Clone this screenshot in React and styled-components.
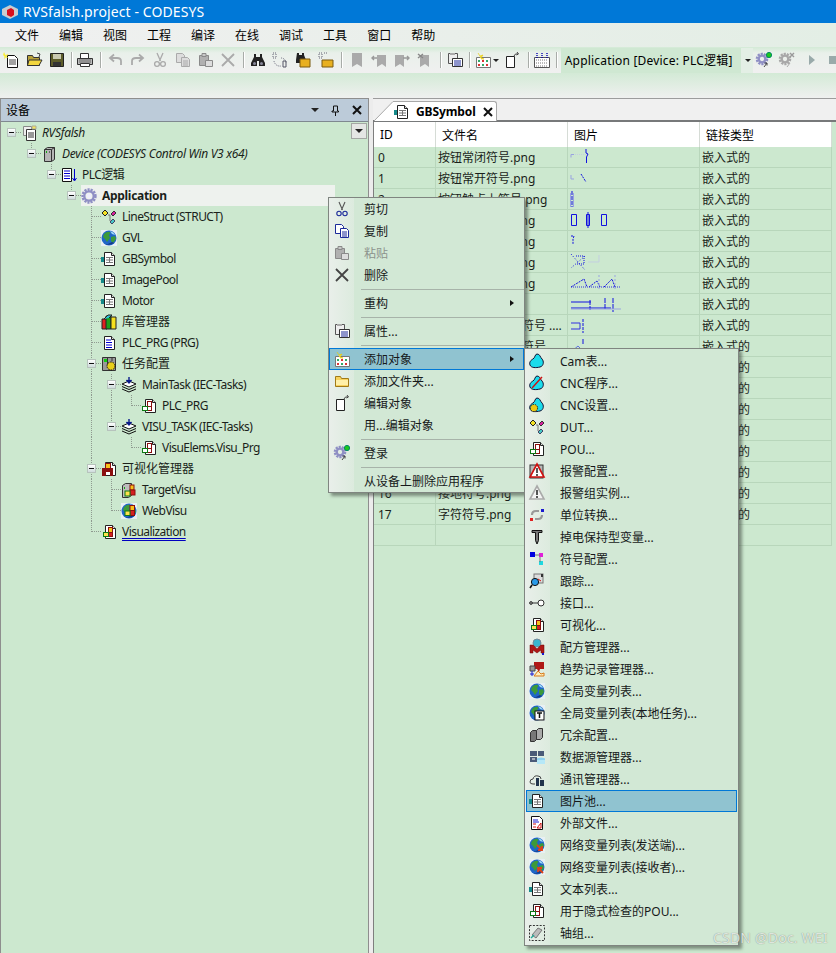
import React from "react";
import styled, { createGlobalStyle } from "styled-components";

const FONT = `"Noto Sans", "Noto Sans CJK SC", sans-serif`;
const GREEN = "#cce8cf";

const Global = createGlobalStyle`
  html, body { margin: 0; padding: 0; background: ${GREEN}; }
  body { font-family: ${FONT}; font-size: 12px; color: #000; overflow: hidden; }
`;

/* ---------- icons ---------- */
const Pg = ({ x = 3 }) => <path d={`M${x + .5} 1.5h7l3 3v10h-10z`} fill="#fff" stroke="#222" />;
const Fold = ({ x = 3 }) => <path d={`M${x + 7.5} 1.5v3h3`} fill="#ddd" stroke="#222" />;
const GlobeBase = () => (
  <>
    <rect x="0" y="0" width="16" height="16" fill="#e8f0f4" />
    <circle cx="8" cy="8" r="7.5" fill="#1f66c8" />
    <path d="M3 4q3-3 6-2 1 2-1 3l1 3-3 4-2-3-2-2zM10 7l4-1 1 3-3 4-2-2z" fill="#3c9a3a" />
    <path d="M9 1q4 1 5 4l-3-1z" fill="#9fd8f5" />
    <path d="M4 14q5 2 9-1l-2-1-4 2z" fill="#163a86" />
  </>
);
const Squares = () => (
  <>
    <rect x="7.5" y="3.5" width="4" height="5" fill="#f7c21a" stroke="#8b1010" />
    <rect x="7.5" y="8.5" width="4" height="4" fill="#d42020" stroke="#8b1010" />
    <rect x="2.5" y="8.5" width="5" height="4" fill="#ffe14d" stroke="#0d7a14" />
  </>
);
const Gear = ({ fill = "#8f8fc4", x = 8, y = 8, r = 6.4 }) => (
  <>
    <circle cx={x} cy={y} r={r} fill="none" stroke={fill} strokeWidth="2.6" strokeDasharray="2.1 1" />
    <circle cx={x} cy={y} r={r - 1.7} fill="none" stroke={fill} strokeWidth="2.3" />
  </>
);
const DutShapes = () => (
  <>
    <path d="M1 4l3-3 3 3-3 3z" fill="#f4e224" stroke="#222" />
    <path d="M10 5l3-3 2 2-3 3z" fill="#d8219e" stroke="#333" />
    <path d="M9 13l3-3 2 2-3 3z" fill="#45c6c6" stroke="#446" />
    <path d="M7 6h2v6" fill="none" stroke="#777" />
  </>
);
const Cam = ({ slash, gear }) => (
  <>
    <path d="M8 1c3 0 3 3 5 5s2 7-2 8-9 1-10-2 1-5 3-6 2-5 4-5z" fill="#1cdcec" stroke="#113" />
    {slash && <path d="M3 13L13 2" stroke="#d01010" strokeWidth="1.4" />}
    {gear && <><circle cx="5" cy="11" r="3.6" fill="#ecc914" stroke="#222" strokeDasharray="1.5 1" /></>}
  </>
);

const ICONS = {
  project: <><path d="M2.5 1.5h8v9h-8z" fill="#eee" stroke="#888" /><path d="M5.5 4.5h9v11h-9z" fill="#fff" stroke="#333" /><path d="M7 8h6M7 10h6M7 12h6" stroke="#333" /><path d="M11 1h4v3h-4z" fill="#f6e55a" stroke="#aa9" /></>,
  device: <><path d="M3.5 3.5l3-2h7v12l-3 2h-7z" fill="#b6b6b6" stroke="#333" /><path d="M3.5 3.5h7v12M10.5 3.5l3-2" fill="none" stroke="#333" /><path d="M5 5h1v2H5z" fill="#1a1" /><path d="M8 5h1v2H8z" fill="#666" /></>,
  plc: <><path d="M1.5 1.5h9v13h-9z" fill="#fff" stroke="#111" /><path d="M3 4h6M3 6.5h6M3 9h6M3 11.5h6" stroke="#0000d0" /><path d="M13.5 2v11M11.5 11l2 3 2-3" fill="none" stroke="#0000d0" /></>,
  gear: <><Gear /><circle cx="8" cy="8" r="2.2" fill="#eef" /></>,
  gearGrey: <><Gear fill="#9b9b9b" /></>,
  dut: <DutShapes />,
  globe: <GlobeBase />,
  table: <><Pg /><Fold /><path d="M0 6h3v5H0z" fill="#158a8a" /><path d="M5 6.5h7M5 9h7M5 11.5h7M8.5 6v6" stroke="#777" /></>,
  library: <><path d="M1 5h5v10H1z" fill="#e02020" stroke="#222" /><path d="M5 2h5v13H5z" fill="#1ca01c" stroke="#222" /><path d="M10 3h5v12h-5z" fill="#f6e11e" stroke="#222" /><path d="M3 5l4-4h4l-3 3" fill="#2cc0d0" stroke="#222" /></>,
  prg: <><Pg /><Fold /><path d="M5 5h5M5 7.5h6M5 10h6M5 12.5h6" stroke="#0000d0" /></>,
  taskcfg: <><path d="M1.5 1.5h13v13h-13z" fill="#9a9a9a" stroke="#333" /><path d="M3 3h3v3H3z" fill="#1c1" /><circle cx="10" cy="10" r="4" fill="#e8cf18" stroke="#111" strokeDasharray="1.6 .9" /><path d="M6.5 2v6M11 2v3" stroke="#333" /></>,
  task: <><path d="M1 7l7-3 7 3-7 3z" fill="#fff" stroke="#111" /><path d="M1 9.5l7 3 7-3M1 12l7 3 7-3" fill="none" stroke="#111" /><path d="M8 0v5M5.5 3l2.5 3 2.5-3" fill="#0a1a8a" stroke="#0a1a8a" strokeWidth="1.4" /></>,
  pou: <><Pg x={4} /><Fold x={4} /><rect x="6.5" y="3.5" width="4" height="5" fill="#fff" stroke="#8b1010" /><rect x="6.5" y="8.5" width="4" height="4" fill="#fff" stroke="#8b1010" /><rect x="1.5" y="8.5" width="5" height="4" fill="#fff" stroke="#0d7a14" /></>,
  vismgr: <><Pg x={4} /><Fold x={4} /><path d="M1 7h11v8h-3v-4H5v4H1z" fill="#8b1010" /><rect x="4.5" y="2.5" width="5" height="5" fill="#f7c21a" stroke="#8b1010" /></>,
  target: <><path d="M1.5 3.5l3-2h6v12l-3 2h-6z" fill="#bdbdbd" stroke="#333" /><path d="M3 5h1v2H3z" fill="#1a1" /><rect x="9" y="3" width="4" height="5" fill="#f7c21a" stroke="#8b1010" /><rect x="9" y="8" width="5" height="5" fill="#d42020" stroke="#8b1010" /><rect x="4" y="9" width="5" height="5" fill="#ffe14d" stroke="#0d7a14" /></>,
  webvisu: <><GlobeBase /><rect x="9" y="2.5" width="4.5" height="5" fill="#f7c21a" stroke="#8b1010" /><rect x="9" y="7.5" width="4.5" height="5" fill="#d42020" stroke="#8b1010" /><rect x="4" y="8" width="5" height="4.5" fill="#ffe14d" stroke="#0d7a14" /></>,
  vis: <><Pg x={4} /><Fold x={4} /><Squares /></>,
  cut: <><path d="M5 1l3.5 8M11 1L7.5 9" stroke="#555" fill="none" strokeWidth="1.1" /><circle cx="5" cy="12.500" r="2.200" fill="none" stroke="#1c2a9a" strokeWidth="1.1" /><circle cx="11" cy="12.500" r="2.200" fill="none" stroke="#1c2a9a" strokeWidth="1.1" /></>,
  copy: <><path d="M1.5 1.5h6l2 2v7h-8z" fill="#fff" stroke="#1c2a9a" /><path d="M6.5 5.5h6l2 2v7h-8z" fill="#fff" stroke="#1c2a9a" /><path d="M8 9h5M8 11h5M8 13h5" stroke="#1c2a9a" /></>,
  paste: <><path d="M1.5 3.5h9v10h-9z" fill="#b0b0b0" stroke="#8a8a8a" /><path d="M4 1.5h4v3H4z" fill="#c8c8c8" stroke="#8a8a8a" /><path d="M7.5 8.5h7v6h-7z" fill="#ddd" stroke="#8a8a8a" /></>,
  del: <path d="M2 2l12 12M14 2L2 14" stroke="#444" strokeWidth="1.8" />,
  props: <><path d="M1.5 1.5h9v10h-9z" fill="#eee" stroke="#555" /><path d="M3 1h5v2H3z" fill="#aaa" /><path d="M5.5 6.5h10v8h-10z" fill="#fff" stroke="#333" /><path d="M7 9h7M7 11h7M7 13h7" stroke="#1c2a9a" /></>,
  add: <><path d="M1.5 5.5h14v10h-14z" fill="#fff" stroke="#777" /><path d="M3 8h2v2H3zM7 8h2v2H7zM11 8h2v2h-2zM3 12h2v2H3zM7 12h2v2H7zM11 12h2v2h-2z" fill="#3a6" /><path d="M7 8h2v2H7zM11 12h2v2h-2zM3 12h2v2H3z" fill="#d33" /><path d="M3 1l2 3 3-1-2 3 3 1-3 0" fill="#f5e23c" stroke="#e8c800" strokeWidth=".6" /></>,
  folder: <><path d="M1.5 13.5v-10h5l1 2h7v8z" fill="#f8d25c" stroke="#a07a18" /><path d="M2 7h12v5H2z" fill="#fff0a8" /></>,
  folderOpen: <><path d="M1.5 13.5v-10h5l1 2h6v8z" fill="#b8a23a" stroke="#333" /><path d="M3 8h13l-3 5.5H1.5z" fill="#f2d63f" stroke="#333" /><path d="M11 1l3 1-1 3" fill="none" stroke="#444" /></>,
  edit: <><path d="M2.5 4.5h8v11h-8z" fill="#fff" stroke="#222" /><path d="M10 4q1-3 4-2M13 0l1.5 2-2 1" fill="none" stroke="#444" /></>,
  login: <><Gear x={6} y={7} r={5} /><circle cx="13" cy="3" r="2.6" fill="#1cc91c" stroke="#086" /><path d="M8 15l3-4M11 11v2.5M11 11H8.5" stroke="#444" fill="none" /></>,
  logout: <><Gear x={6} y={7} r={5} fill="#a8a8a8" /><path d="M11 1l4 4M15 1l-4 4" stroke="#999" strokeWidth="1.4" /><path d="M8 15l3-4" stroke="#aaa" /></>,
  cam: <Cam />,
  cnc: <Cam slash />,
  cncset: <Cam gear />,
  alarm: <><rect x="1" y="2" width="13" height="13" fill="#b8b8b8" stroke="#333" /><path d="M8 1l7 13H1z" fill="#fff" stroke="#d01010" strokeWidth="1.6" /><path d="M8 5v5M8 11v2" stroke="#111" strokeWidth="1.4" /></>,
  alarmgrp: <><path d="M8 1l7 13H1z" fill="#f4f4f4" stroke="#aaa" strokeWidth="1.6" /><path d="M8 5v5M8 11v2" stroke="#111" strokeWidth="1.4" /></>,
  unit: <><path d="M3 8q0-4 4-4h3M13 8q0 4-4 4H6" stroke="#999" strokeWidth="2.2" fill="none" /><path d="M12 2h3v3h-3z" fill="#1a1ad0" /><path d="M1 11h3v3H1z" fill="#e02020" /></>,
  pin: <path d="M3 1.5h10v2H9.5v8L8 15l-1.5-3.5v-8H3z" fill="#777" stroke="#111" />,
  symbol: <><path d="M1 1h5v5H1z" fill="#0000e0" /><path d="M10 2h4v4h-4z" fill="#e020d8" /><path d="M10 10h4v4h-4z" fill="#20d8e0" /><path d="M6 4h5M11 6v5" stroke="#777" fill="none" /></>,
  trace: <><rect x="5" y="1" width="9" height="9" fill="#ddd" stroke="#777" /><circle cx="6" cy="9" r="3.6" fill="#2a9ae8" stroke="#111" /><path d="M3 12l-2 3" stroke="#111" strokeWidth="1.6" /><path d="M9 6l3 2" stroke="#d01010" /><path d="M13 1v3" stroke="#333" strokeWidth="2" /></>,
  iface: <><circle cx="12" cy="8" r="3" fill="#fff" stroke="#333" /><path d="M1 8h8" stroke="#333" /><circle cx="2" cy="8" r="1.4" fill="none" stroke="#333" /></>,
  recipe: <><circle cx="8" cy="4" r="4" fill="#3ab6d0" stroke="#789" /><path d="M1 14V6h3l4 4 4-4h3v8h-3v-3l-4 3-4-3v3z" fill="#b01818" stroke="#600" strokeWidth=".5" /><path d="M13 14h2v2h-2z" fill="#1a1ad0" /></>,
  trend: <><path d="M5 1h10v7l-4 0-1 3-2-3H5z" fill="#b01818" /><path d="M1 5h5v5H1z" fill="#999" stroke="#444" /><path d="M5 15l4-5 3 3 3-1v3z" fill="#ffeebb" stroke="#d8781a" /><path d="M3 10v5M1 13h4" stroke="#1a1ad0" /></>,
  globeT: <><GlobeBase /><rect x="6" y="6" width="9" height="9" fill="#fff" stroke="#111" /><path d="M8 8h5M10.5 8v5" stroke="#111" strokeWidth="1.5" /></>,
  redund: <><path d="M1.5 5.5l2-2h4v9l-2 2h-4z" fill="#777" stroke="#333" /><path d="M7.5 3.5l2-2h4v9l-2 2h-4z" fill="#aaa" stroke="#333" /></>,
  datasrc: <><path d="M1 2h7v5H1zM9 2h6v5H9zM1 8h7v5H1z" fill="#4a5a78" /><path d="M3 10h3" stroke="#fff" /><ellipse cx="12" cy="10" rx="4" ry="1.5" fill="#8fd0f0" /><path d="M8 10h8v5H8z" fill="#8fd0f0" /><path d="M8 12h8M8 14h8" stroke="#dff" /></>,
  comm: <><path d="M1 11q0-3 3-3 1-4 5-3 3 0 3 3" fill="none" stroke="#444" /><path d="M1 11q0 2 3 2h2" fill="none" stroke="#444" /><path d="M7 7h3v8H7zM11 9h4v6h-4z" fill="#23344e" /></>,
  ext: <><path d="M2.5 1.5h8l3 3v10h-11z" fill="#fff" stroke="#111" /><path d="M4 5h5M4 7h6" stroke="#1a1ad0" /><path d="M4 9h3M4 12h3" stroke="#d01010" /><path d="M8 13l4-5v5z" fill="#fff" stroke="#d01010" /></>,
  globeS: <><GlobeBase /><path d="M8 8l5 5M13 9v4H9" stroke="#e0401a" strokeWidth="1.8" fill="none" /></>,
  globeR: <><GlobeBase /><path d="M14 14L9 9M9 13V9h4" stroke="#e0401a" strokeWidth="1.8" fill="none" /></>,
  axis: <><rect x=".5" y=".5" width="15" height="15" fill="none" stroke="#333" strokeDasharray="2 1.4" /><path d="M3 10l6-7 4 2-6 8z" fill="#bbb" stroke="#777" /><path d="M2 13l3-3" stroke="#2a9" strokeWidth="1.4" /></>,
  print: <><path d="M3.5 1.5h8v5h-8z" fill="#fff" stroke="#333" /><path d="M.5 6.5h15v6h-15z" fill="#bbb" stroke="#333" /><path d="M3.5 11.5h9v3h-9z" fill="#fff" stroke="#333" /><path d="M2 8h12M2 10h12" stroke="#666" /></>,
  save: <><path d="M1.5 1.5h13v13h-13z" fill="#5d5d2a" stroke="#222" /><path d="M4 2h8v5H4z" fill="#c9c9b0" /><path d="M4 10h8v4H4z" fill="#333" /></>,
  new: <><path d="M4.5 3.5h7l3 3v9h-10z" fill="#fff" stroke="#111" /><path d="M6 8h7M6 10h7M6 12h7" stroke="#444" /><path d="M1 0l1.5 3 3-1-2 2.5 2 1.5-3-.5L1 7.500 1.500 4.500 0 3z" fill="#f9ee3c" /></>,
  undo: <path d="M14 13V9q0-3-4-3H4M7 2.500L3 6l4 3.500" fill="none" stroke="#aaa" strokeWidth="1.8" />,
  redo: <path d="M2 13V9q0-3 4-3h6M9 2.500L13 6l-4 3.500" fill="none" stroke="#aaa" strokeWidth="1.8" />,
  cutG: <><path d="M5 1l3.5 8M11 1L7.5 9" stroke="#aaa" fill="none" strokeWidth="1.3" /><circle cx="5" cy="12" r="2.4" fill="none" stroke="#aaa" strokeWidth="1.3" /><circle cx="11" cy="12" r="2.4" fill="none" stroke="#aaa" strokeWidth="1.3" /></>,
  copyG: <><path d="M1.500 1.500h6l2 2v7h-8z" fill="#ddd" stroke="#aaa" /><path d="M6.500 5.500h6l2 2v7h-8z" fill="#ddd" stroke="#aaa" /><path d="M8 9h5M8 11h5M8 13h5" stroke="#aaa" /></>,
  delG: <path d="M2 2l12 12M14 2L2 14" stroke="#aaa" strokeWidth="1.8" />,
  find: <><path d="M4 2h2v3h4V2h2v3l3 6v3H9V9H7v5H1v-3l3-6z" fill="#222" /><circle cx="4.500" cy="11.500" r="1.500" fill="#889" /><circle cx="11.500" cy="11.500" r="1.500" fill="#889" /></>,
  findN: <><path d="M1 1h3v5H1zM9 6a5 5 0 0 1 5 5" fill="none" stroke="#667" strokeDasharray="1 1" /><path d="M2 9a6 6 0 0 0 7 5" fill="none" stroke="#667" strokeDasharray="1 1" /><path d="M11 9h3v6h-3z" fill="none" stroke="#556" /></>,
  findF: <><path d="M2 1h2v2h3V1h2v2l2 5v3H1V8z" fill="#222" /><path d="M5 7h10v8H5z" fill="#e8b020" stroke="#7a5a10" /></>,
  findFN: <><path d="M1 1h3v5H1zM6 1h4" fill="none" stroke="#667" strokeDasharray="1 1" /><path d="M4 8h11v7H4z" fill="#e8b020" stroke="#7a5a10" /></>,
  book: <path d="M3 1h10v14l-5-3-5 3z" fill="#aaa" />,
  bookP: <><path d="M6 3h9v12l-4-3-5 3z" fill="#aaa" /><path d="M1 6h5M3 4L1 6l2 2" stroke="#999" fill="none" strokeWidth="1.400" /></>,
  bookN: <><path d="M1 3h9v12l-4-3-5 3z" fill="#aaa" /><path d="M9 6h6M13 4l2 2-2 2" stroke="#999" fill="none" strokeWidth="1.400" /></>,
  bookX: <><path d="M3 3h9v12l-4-3-5 3z" fill="#aaa" /><path d="M1 2l5 4M6 2L1 6" stroke="#888" strokeWidth="1.400" /></>,
  grid: <><path d="M.5 5.500h15v10H.5z" fill="#fff" stroke="#555" /><path d="M2 8h12M2 11h12M2 14h12" stroke="#777" strokeDasharray="1 1" /><path d="M3 1v5M8 1v5M13 1v5" stroke="#00a" strokeDasharray="1 1" strokeWidth="1.400" /></>,
  play: <path d="M5 3l6 5-6 5z" fill="#9aa" />,
  stop: <path d="M4 4h8v8H4z" fill="#9aa" />,
};

const IconBox = styled.svg`
  width: ${p => p.$s || 16}px;
  height: ${p => p.$s || 16}px;
  flex: none;
  display: block;
  overflow: visible;
`;
const Icon = ({ name, s }) => <IconBox viewBox="0 0 16 16" $s={s}>{ICONS[name]}</IconBox>;

/* ---------- chrome ---------- */
const Page = styled.div`
  position: relative;
  width: 836px;
  height: 953px;
  overflow: hidden;
  display: flex;
  flex-direction: column;
  background: ${GREEN};
`;
const TitleBar = styled.div`
  height: 23px;
  flex: none;
  background: #0078d7;
  color: #fff;
  display: flex;
  align-items: center;
  gap: 5px;
  padding-left: 2px;
  font-size: 14px;
  letter-spacing: .1px;
`;
const MenuBar = styled.div`
  height: 24px;
  flex: none;
  display: flex;
  align-items: center;
  padding-left: 5px;
  background: linear-gradient(90deg, #f0f0f0, #e3eee5);
`;
const MenuEntry = styled.span`
  padding: 0 10px;
  font-size: 12px;
`;
const ToolBar = styled.div`
  height: 26px;
  flex: none;
  display: flex;
  align-items: center;
  background: linear-gradient(180deg, #d3ead6 0, #e9f0ea 6px, #f0f0f0 100%);
  padding-left: 0;
`;
const ToolBtn = styled.span`
  width: ${p => p.$w || 22.7}px;
  height: 24px;
  flex: none;
  display: flex;
  align-items: center;
  justify-content: center;
`;
const ToolSep = styled.span`
  width: ${p => p.$w || 7}px;
  flex: none;
  height: 20px;
  position: relative;
  &::before {
    content: "";
    position: absolute;
    left: 50%;
    top: 2px;
    bottom: 2px;
    width: 1px;
    background: #a8aca8;
    box-shadow: 1px 0 0 #fff;
  }
`;
const Caret = styled.span`
  width: 0;
  height: 0;
  border-left: ${p => p.$s || 3}px solid transparent;
  border-right: ${p => p.$s || 3}px solid transparent;
  border-top: ${p => p.$s || 3}px solid #222;
  margin-left: ${p => (p.$s ? 0 : 2)}px;
`;
const Combo = styled.div`
  width: 180px;
  height: 25px;
  flex: none;
  background: #cfe8d2;
  display: flex;
  align-items: center;
  padding-left: 4px;
  box-sizing: border-box;
  font-size: 12px;
  white-space: nowrap;
  letter-spacing: .2px;
`;
const ComboBtn = styled.span`
  width: 12px;
  height: 25px;
  flex: none;
  background: #e3efe5;
  display: flex;
  align-items: center;
  justify-content: center;
`;
const Strip = styled.div`
  height: 25px;
  flex: none;
  background: linear-gradient(180deg, #d3ead6, #eff0ef);
`;
const Main = styled.div`
  flex: 1;
  min-height: 0;
  display: flex;
  gap: 4px;
  background: #ececec;
`;
const LeftPanel = styled.section`
  width: 369px;
  flex: none;
  box-sizing: border-box;
  border: 1px solid #8e8e8e;
  border-bottom: 0;
  display: flex;
  flex-direction: column;
  background: ${GREEN};
  position: relative;
`;
const PanelHead = styled.div`
  height: 23px;
  flex: none;
  box-sizing: border-box;
  background: #bccbd9;
  border-bottom: 1px solid #7f8890;
  display: flex;
  align-items: center;
  padding: 0 1px 0 5px;
  font-size: 12px;
`;
const PanelTitle = styled.span`
  flex: 1;
`;
const HeadBtn = styled.span`
  width: 21px;
  display: flex;
  justify-content: center;
  align-items: center;
  font-weight: 700;
`;
const Dropper = styled.span`
  position: absolute;
  right: 1px;
  top: 24px;
  width: 16px;
  height: 16px;
  background: #e4e6e4;
  border: 1px solid #a3a7a3;
  box-sizing: border-box;
  display: flex;
  align-items: center;
  justify-content: center;
`;

/* ---------- tree ---------- */
const Tree = styled.div`
  display: flex;
  flex-direction: column;
`;
const TreeRow = styled.div`
  display: flex;
  height: 21px;
  align-items: center;
  white-space: nowrap;
`;
const Cell = styled.span`
  width: 20px;
  height: 21px;
  flex: none;
  position: relative;
  display: flex;
  align-items: center;
  justify-content: center;
  &::before {
    content: "";
    display: ${p => (p.$v ? "block" : "none")};
    position: absolute;
    left: 10px;
    top: 0;
    height: ${p => (p.$v === "full" ? "21px" : "11px")};
    border-left: 1px dotted #8f9a90;
  }
  &::after {
    content: "";
    display: ${p => (p.$h ? "block" : "none")};
    position: absolute;
    left: 10px;
    top: 10px;
    width: 10px;
    border-top: 1px dotted #8f9a90;
  }
`;
const Expander = styled.span`
  position: relative;
  z-index: 1;
  width: 9px;
  height: 9px;
  box-sizing: border-box;
  border: 1px solid #b7c3bd;
  background: linear-gradient(180deg, #fff, #cfdcdc);
  display: flex;
  align-items: center;
  justify-content: center;
  &::before {
    content: "";
    width: 5px;
    height: 1px;
    background: #111;
  }
`;
const IconCell = styled.span`
  width: 20px;
  height: 21px;
  flex: none;
  display: flex;
  align-items: center;
  justify-content: flex-start;
`;
const NodeLabel = styled.span`
  margin-left: 1px;
  padding-bottom: 1px;
  font-size: 12px;
  font-style: ${p => (p.$italic ? "italic" : "normal")};
  font-weight: ${p => (p.$bold ? 700 : 400)};
  letter-spacing: ${p => (p.$cjk ? "0" : p.$italic || p.$bold ? "-.3px" : "-.55px")};
  color: #1a1f1a;
  text-decoration: ${p => (p.$active ? "underline double #0000c0" : "none")};
  text-underline-offset: 2px;
`;
const SelectBand = styled.div`
  display: flex;
  align-items: center;
  height: 21px;
  width: 254px;
  background: #eef2ee;
`;

const TREE = [
  { l: 0, own: "exp", icon: "project", t: "RVSfalsh", italic: 1 },
  { l: 1, own: "exp", v: "top", icon: "device", t: "Device (CODESYS Control Win V3 x64)", italic: 1 },
  { l: 2, own: "exp", v: "top", icon: "plc", t: "PLC逻辑" },
  { l: 3, own: "exp", v: "top", icon: "gear", t: "Application", bold: 1, sel: 1 },
  { l: 4, v: "full", icon: "dut", t: "LineStruct (STRUCT)" },
  { l: 4, v: "full", icon: "globe", t: "GVL" },
  { l: 4, v: "full", icon: "table", t: "GBSymbol" },
  { l: 4, v: "full", icon: "table", t: "ImagePool" },
  { l: 4, v: "full", icon: "table", t: "Motor" },
  { l: 4, v: "full", icon: "library", t: "库管理器", cjk: 1 },
  { l: 4, v: "full", icon: "prg", t: "PLC_PRG (PRG)" },
  { l: 4, own: "exp", v: "full", icon: "taskcfg", t: "任务配置", cjk: 1 },
  { l: 5, own: "exp", g: [4], v: "full", icon: "task", t: "MainTask (IEC-Tasks)" },
  { l: 6, g: [4, 5], v: "top", icon: "pou", t: "PLC_PRG" },
  { l: 5, own: "exp", g: [4], v: "top", icon: "task", t: "VISU_TASK (IEC-Tasks)" },
  { l: 6, g: [4], v: "top", icon: "pou", t: "VisuElems.Visu_Prg" },
  { l: 4, own: "exp", v: "full", icon: "vismgr", t: "可视化管理器", cjk: 1 },
  { l: 5, g: [4], v: "full", icon: "target", t: "TargetVisu" },
  { l: 5, g: [4], v: "top", icon: "webvisu", t: "WebVisu" },
  { l: 4, v: "top", icon: "vis", t: "Visualization", active: 1 },
];

const Node = ({ n }) => {
  const cells = [];
  for (let i = 0; i < n.l; i++) cells.push(<Cell key={i} $v={(n.g || []).includes(i) ? "full" : null} />);
  const body = (
    <>
      <IconCell><Icon name={n.icon} /></IconCell>
      <NodeLabel $italic={n.italic} $bold={n.bold} $cjk={n.cjk} $active={n.active}>{n.t}</NodeLabel>
    </>
  );
  return (
    <TreeRow>
      {cells}
      <Cell $v={n.v} $h>{n.own === "exp" && <Expander />}</Cell>
      {n.sel ? <SelectBand>{body}</SelectBand> : body}
    </TreeRow>
  );
};

/* ---------- editor ---------- */
const RightPanel = styled.section`
  flex: 1;
  min-width: 0;
  display: flex;
  flex-direction: column;
  background: ${GREEN};
  border-left: 1px solid #7e7e7e;
`;
const TabStrip = styled.div`
  height: 24px;
  flex: none;
  box-sizing: border-box;
  background: #f0f0f0;
  border-top: 1px solid #9c9c9c;
  border-bottom: 2px solid #77797a;
  display: flex;
  align-items: flex-end;
  margin-left: -1px;
`;
const TabSlant = styled.svg`
  width: 19px;
  height: 20px;
  flex: none;
  margin-left: 1px;
  margin-bottom: -1px;
`;
const Tab = styled.div`
  width: 104px;
  height: 20px;
  box-sizing: border-box;
  background: #fff;
  border: 1px solid #a8a8a8;
  border-left: 0;
  border-bottom: 0;
  border-radius: 0 3px 0 0;
  display: flex;
  align-items: center;
  padding-left: 1px;
  font-weight: 700;
  font-size: 12px;
  margin-bottom: -1px;
`;
const TabName = styled.span`
  margin-left: 6px;
  letter-spacing: -.1px;
`;
const TabClose = styled.span`
  margin-left: 7px;
  display: flex;
`;
const Table = styled.div`
  display: grid;
  grid-template-columns: 62px 132px 132px 132px;
  grid-template-rows: 25px repeat(19, 21px);
  width: 458px;
`;
const Th = styled.div`
  background: #fff;
  border-right: 1px solid #d6dcd6;
  box-sizing: border-box;
  padding-left: ${p => p.$p || 6}px;
  display: flex;
  align-items: center;
  font-size: 12px;
`;
const Td = styled.div`
  height: 21px;
  box-sizing: border-box;
  border-right: 1px solid #b8d6bb;
  border-bottom: 1px solid #b8d6bb;
  padding-left: ${p => p.$p ?? 2}px;
  padding-right: 1px;
  line-height: 21px;
  font-size: 12px;
  white-space: nowrap;
  overflow: hidden;
  text-overflow: ellipsis;
  color: #1a1f1a;
`;
const Thumb = styled.svg`
  width: 130px;
  height: 20px;
  display: block;
`;

const THUMBS = {
  0: <><path d="M3 7.500v3M3 7.500h3" stroke="#99a3e0" fill="none" /><path d="M7 7.500h11" stroke="#c3cfe0" strokeDasharray="1 1" /><path d="M18 2v4l2 1-1.500 3v6" stroke="#1010e0" fill="none" /></>,
  1: <><path d="M3 7v4h3" stroke="#99a3e0" fill="none" /><path d="M13 6l5 8" stroke="#1010e0" strokeDasharray="2 1" /></>,
  2: <><path d="M2.500 4v14M5.500 4v14" stroke="#99a3e0" /><path d="M4 2v16" stroke="#1010e0" strokeDasharray="4 1" /></>,
  3: <><path d="M3.500 4.500h5v11h-5zM18.500 4.500h3v11h-3zM33.500 4.500h5v11h-5z" stroke="#1010e0" fill="none" /><path d="M20 2v16" stroke="#1010e0" /></>,
  4: <path d="M3 5h3l-1 3v5" stroke="#1010e0" fill="none" strokeDasharray="2 1" />,
  5: <><path d="M3 2l14 16M17 4L3 16" stroke="#1010e0" strokeDasharray="1 2" /><path d="M8 4h8v8H8" stroke="#1010e0" fill="none" strokeDasharray="1 1" /><path d="M20 10h11V3" stroke="#c3cfe0" fill="none" /></>,
  6: <><path d="M3 14L16 6l3 8M21 14l8-6 3 6M36 14l8-8 3 8" stroke="#1010e0" fill="none" strokeDasharray="2 1" /><path d="M3 14h50" stroke="#3030e0" strokeDasharray="1 1" /><path d="M31 2v16M47 2v14" stroke="#99a3e0" strokeDasharray="2 2" /></>,
  7: <><path d="M3 8h20M3 14h40" stroke="#1010e0" /><path d="M22 6v10M37 4v12M45 4v14" stroke="#1010e0" strokeDasharray="5 1" /><path d="M3 15h50" stroke="#99a3e0" /></>,
  8: <><path d="M3 8h9v6H3" stroke="#3030e0" fill="none" /><path d="M15 4v14" stroke="#1010e0" strokeDasharray="3 1" /></>,
  9: <><path d="M3 16l7-6 4 4" stroke="#6070e0" fill="none" /><path d="M3 16h14" stroke="#99a3e0" /><path d="M15 3v5" stroke="#1010e0" /></>,
};

const ROWS = [
  "按钮常闭符号.png", "按钮常开符号.png", "按钮触点上符号.png", "按钮组合符号.png", "按钮联动符号.png",
  "电机符号图一.png", "电机符号图二.png", "开关符号图.png", "接触器常闭触点符号 .png", "接触器常开触点符号 .png",
  "线圈符号.png", "指示灯符号.png", "电阻符号.png", "电容符号.png", "熔断器符号.png", "变压器符号.png", "接地符号.png", "字符符号.png",
];

/* ---------- context menus ---------- */
const Menu = styled.div`
  position: absolute;
  left: ${p => p.$x}px;
  top: ${p => p.$y}px;
  width: ${p => p.$w}px;
  box-sizing: border-box;
  border: 1px solid #7f8580;
  padding: ${p => p.$pad}px;
  background: linear-gradient(90deg, #e9efea 0, #dcebde ${p => p.$strip}px, #d2e8d5 ${p => p.$strip}px);
  box-shadow: 3px 3px 3px rgba(60, 70, 60, .55);
  z-index: 5;
`;
const Item = styled.div`
  height: 22px;
  box-sizing: border-box;
  display: flex;
  align-items: center;
  font-size: 12px;
  white-space: nowrap;
  color: ${p => (p.$off ? "#8c928c" : "#16191a")};
  background: ${p => (p.$hi ? "#90c3d0" : "transparent")};
  border: 1px solid ${p => (p.$hi ? "#0078d7" : "transparent")};
`;
const ItemIcon = styled.span`
  width: ${p => p.$w}px;
  flex: none;
  display: flex;
  justify-content: center;
`;
const ItemText = styled.span`
  margin-left: ${p => p.$m}px;
`;
const Arrow = styled.span`
  margin-left: auto;
  margin-right: 9px;
  width: 0;
  height: 0;
  border-top: 3.500px solid transparent;
  border-bottom: 3.500px solid transparent;
  border-left: 4px solid #111;
`;
const Sep = styled.div`
  height: 6px;
  display: flex;
  align-items: center;
  margin-left: 32px;
  &::after {
    content: "";
    flex: 1;
    height: 1px;
    background: #a7b3a9;
  }
`;

const M1 = [
  ["cut", "剪切"], ["copy", "复制"], ["paste", "粘贴", { off: 1 }], ["del", "删除"], 0,
  [null, "重构", { sub: 1 }], 0, ["props", "属性..."], 0,
  ["add", "添加对象", { hi: 1, sub: 1 }], ["folder", "添加文件夹..."], ["edit", "编辑对象"], [null, "用...编辑对象"], 0,
  ["login", "登录"], 0, [null, "从设备上删除应用程序"],
];
const M2 = [
  ["cam", "Cam表..."], ["cnc", "CNC程序..."], ["cncset", "CNC设置..."], ["dut", "DUT..."], ["pou", "POU..."],
  ["alarm", "报警配置..."], ["alarmgrp", "报警组实例..."], ["unit", "单位转换..."], ["pin", "掉电保持型变量..."], ["symbol", "符号配置..."],
  ["trace", "跟踪..."], ["iface", "接口..."], ["vis", "可视化..."], ["recipe", "配方管理器..."], ["trend", "趋势记录管理器..."],
  ["globe", "全局变量列表..."], ["globeT", "全局变量列表(本地任务)..."], ["redund", "冗余配置..."], ["datasrc", "数据源管理器..."], ["comm", "通讯管理器..."],
  ["table", "图片池...", { hi: 1 }], ["ext", "外部文件..."], ["globeS", "网络变量列表(发送端)..."], ["globeR", "网络变量列表(接收者)..."], ["table", "文本列表..."],
  ["pou", "用于隐式检查的POU..."], ["axis", "轴组..."],
];

const MenuList = ({ items, iconW, gapText }) =>
  items.map((it, i) =>
    it === 0 ? (
      <Sep key={i} />
    ) : (
      <Item key={i} $hi={it[2]?.hi} $off={it[2]?.off}>
        <ItemIcon $w={iconW}>{it[0] && <Icon name={it[0]} />}</ItemIcon>
        <ItemText $m={gapText}>{it[1]}</ItemText>
        {it[2]?.sub && <Arrow />}
      </Item>
    )
  );

const Watermark = styled.div`
  position: absolute;
  left: 713px;
  top: 928px;
  font-size: 14px;
  color: rgba(240, 245, 240, .85);
  z-index: 6;
  letter-spacing: .2px;
  text-shadow: 0 0 1px rgba(90, 100, 90, .8);
`;

const MENUS = ["文件", "编辑", "视图", "工程", "编译", "在线", "调试", "工具", "窗口", "帮助"];

export default function App() {
  return (
    <Page>
      <Global />
      <TitleBar>
        <svg width="16" height="16" viewBox="0 0 16 16">
          <path d="M0 5l8-4 8 4v6l-8 4-8-4z" fill="#c9ccd0" />
          <path d="M5 6l4-2 3 2v5l-3 2-4-2z" fill="#d80e1e" />
        </svg>
        <span>RVSfalsh.project - CODESYS</span>
      </TitleBar>
      <MenuBar>{MENUS.map(m => <MenuEntry key={m}>{m}</MenuEntry>)}</MenuBar>
      <ToolBar>
        <ToolBtn><Icon name="new" /></ToolBtn>
        <ToolBtn><Icon name="folderOpen" /></ToolBtn>
        <ToolBtn><Icon name="save" /></ToolBtn>
        <ToolSep $w={5.6} />
        <ToolBtn><Icon name="print" /></ToolBtn>
        <ToolSep $w={7.3} />
        <ToolBtn><Icon name="undo" /></ToolBtn>
        <ToolBtn><Icon name="redo" /></ToolBtn>
        <ToolBtn><Icon name="cutG" /></ToolBtn>
        <ToolBtn><Icon name="copyG" /></ToolBtn>
        <ToolBtn><Icon name="paste" /></ToolBtn>
        <ToolBtn><Icon name="delG" /></ToolBtn>
        <ToolSep $w={6.7} />
        <ToolBtn><Icon name="find" /></ToolBtn>
        <ToolBtn><Icon name="findN" /></ToolBtn>
        <ToolBtn><Icon name="findF" /></ToolBtn>
        <ToolBtn><Icon name="findFN" /></ToolBtn>
        <ToolSep $w={8.2} />
        <ToolBtn><Icon name="book" /></ToolBtn>
        <ToolBtn><Icon name="bookP" /></ToolBtn>
        <ToolBtn><Icon name="bookN" /></ToolBtn>
        <ToolBtn><Icon name="bookX" /></ToolBtn>
        <ToolSep $w={7.2} />
        <ToolBtn><Icon name="props" /></ToolBtn>
        <ToolSep $w={6.7} />
        <ToolBtn $w={28}><Icon name="add" /><Caret /></ToolBtn>
        <ToolBtn $w={22}><Icon name="edit" /></ToolBtn>
        <ToolSep $w={10} />
        <ToolBtn $w={18}><Icon name="grid" /></ToolBtn>
        <ToolSep $w={10} />
        <Combo>Application [Device: PLC逻辑]</Combo>
        <ComboBtn><Caret /></ComboBtn>
        <ToolBtn $w={23}><Icon name="login" /></ToolBtn>
        <ToolBtn $w={23}><Icon name="logout" /></ToolBtn>
        <ToolBtn $w={26}><Icon name="play" /></ToolBtn>
        <ToolBtn $w={16}><Icon name="stop" /></ToolBtn>
      </ToolBar>
      <Strip />
      <Main>
        <LeftPanel>
          <PanelHead>
            <PanelTitle>设备</PanelTitle>
            <HeadBtn><Caret $s={4} /></HeadBtn>
            <HeadBtn>
              <svg width="9" height="11" viewBox="0 0 9 11"><path d="M2.500 1h4v5h1v1H1V6h1.500zM4.500 7v4" fill="none" stroke="#111" /></svg>
            </HeadBtn>
            <HeadBtn>
              <svg width="10" height="10" viewBox="0 0 10 10"><path d="M1 1l8 8M9 1L1 9" stroke="#111" strokeWidth="2" /></svg>
            </HeadBtn>
          </PanelHead>
          <Tree>{TREE.map((n, i) => <Node key={i} n={n} />)}</Tree>
          <Dropper><Caret $s={4} /></Dropper>
        </LeftPanel>
        <RightPanel>
          <TabStrip>
            <TabSlant viewBox="0 0 19 20"><path d="M0 20L19 .5V20z" fill="#fff" /><path d="M0 20L19 .5" stroke="#a8a8a8" fill="none" /></TabSlant>
            <Tab>
              <Icon name="table" />
              <TabName>GBSymbol</TabName>
              <TabClose>
                <svg width="10" height="10" viewBox="0 0 10 10"><path d="M1 1l8 8M9 1L1 9" stroke="#111" strokeWidth="2" /></svg>
              </TabClose>
            </Tab>
          </TabStrip>
          <Table>
            {["ID", "文件名", "图片", "链接类型"].map(h => <Th key={h}>{h}</Th>)}
            {ROWS.map((r, i) => (
              <React.Fragment key={i}>
                <Td $p={4}>{i}</Td>
                <Td>{r}</Td>
                <Td $p={0}><Thumb viewBox="0 0 130 20">{THUMBS[i]}</Thumb></Td>
                <Td>嵌入式的</Td>
              </React.Fragment>
            ))}
            <Td /><Td /><Td /><Td />
          </Table>
        </RightPanel>
      </Main>

      <Menu $x={328} $y={197} $w={197} $pad={0} $strip={25}>
        <MenuList items={M1} iconW={23} gapText={11} />
      </Menu>
      <Menu $x={524} $y={348} $w={215} $pad={1} $strip={25}>
        <MenuList items={M2} iconW={20} gapText={13} />
      </Menu>
      <Watermark>CSDN @Doc. WEI</Watermark>
    </Page>
  );
}
